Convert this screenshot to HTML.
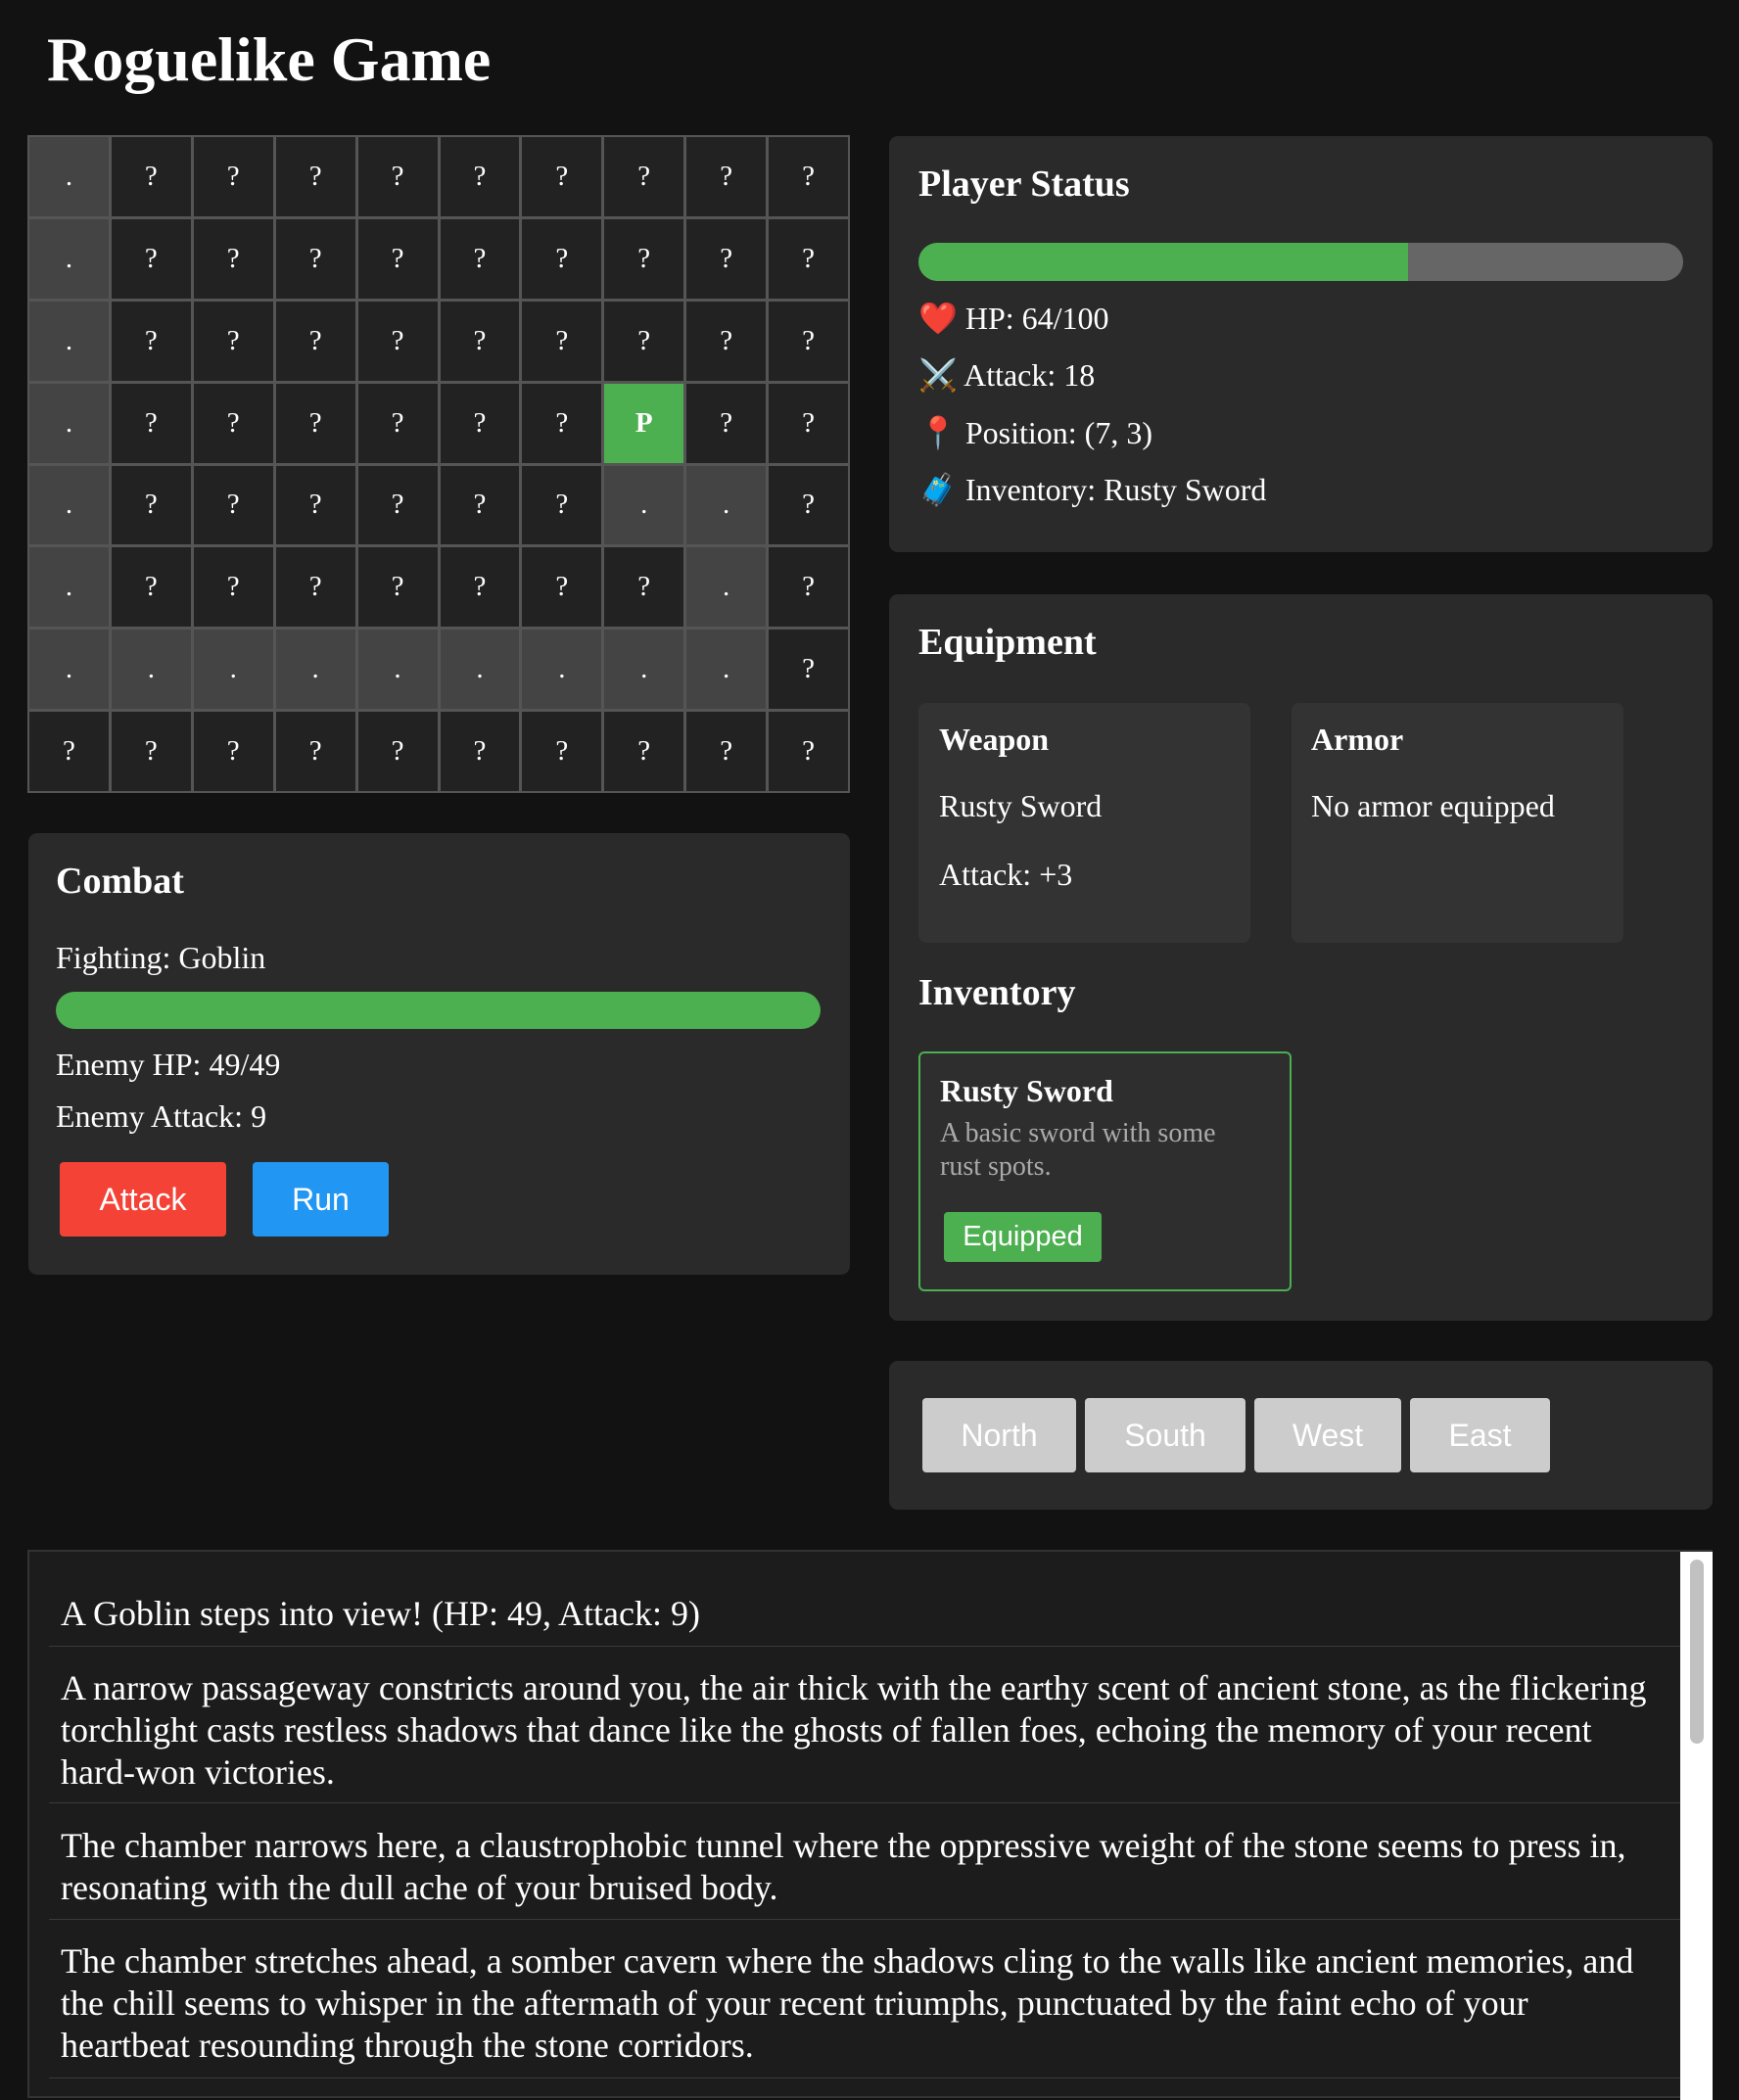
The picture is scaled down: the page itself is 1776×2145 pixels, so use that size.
<!DOCTYPE html>
<html><head><meta charset="utf-8"><style>
*{box-sizing:border-box;margin:0;padding:0}
body{width:1776px;height:2132px;background:#121212;color:#fff;font-family:"Liberation Serif",serif;position:relative;overflow:hidden}
.a{position:absolute}
h1{position:absolute;left:48px;top:24px;font-size:64px;font-weight:bold}
.grid{position:absolute;left:28px;top:138px;width:840px;height:672px;background:#555;display:grid;grid-template-columns:repeat(10,1fr);grid-template-rows:repeat(8,1fr);gap:3px;padding:2px}
.grid div{background:#222;display:flex;align-items:center;justify-content:center;font-size:29px}
.grid div.v{background:#444}
.grid div.p{background:#4caf50;font-weight:bold}
.panel{position:absolute;background:#2a2a2a;border-radius:9px}
h2{position:absolute;font-size:38px;font-weight:bold}
.t{position:absolute;font-size:32px;white-space:nowrap}
.card{position:absolute;background:#333;border-radius:8px}
.btn{position:absolute;font-family:"Liberation Sans",sans-serif;font-size:32px;color:#fff;display:flex;align-items:center;justify-content:center;border-radius:4px}
.log{position:absolute;left:28px;top:1583px;width:1721px;height:560px;border:2px solid #333;background:#1c1c1c}
.log p{position:absolute;left:32px;width:1628px;font-size:36px;line-height:43px}
.sep{position:absolute;left:20px;width:1680px;height:1px;background:#3a3a3a}
</style></head><body>
<h1>Roguelike Game</h1>
<div class="grid">
<div class="v">.</div><div>?</div><div>?</div><div>?</div><div>?</div><div>?</div><div>?</div><div>?</div><div>?</div><div>?</div>
<div class="v">.</div><div>?</div><div>?</div><div>?</div><div>?</div><div>?</div><div>?</div><div>?</div><div>?</div><div>?</div>
<div class="v">.</div><div>?</div><div>?</div><div>?</div><div>?</div><div>?</div><div>?</div><div>?</div><div>?</div><div>?</div>
<div class="v">.</div><div>?</div><div>?</div><div>?</div><div>?</div><div>?</div><div>?</div><div class="p">P</div><div>?</div><div>?</div>
<div class="v">.</div><div>?</div><div>?</div><div>?</div><div>?</div><div>?</div><div>?</div><div class="v">.</div><div class="v">.</div><div>?</div>
<div class="v">.</div><div>?</div><div>?</div><div>?</div><div>?</div><div>?</div><div>?</div><div>?</div><div class="v">.</div><div>?</div>
<div class="v">.</div><div class="v">.</div><div class="v">.</div><div class="v">.</div><div class="v">.</div><div class="v">.</div><div class="v">.</div><div class="v">.</div><div class="v">.</div><div>?</div>
<div>?</div><div>?</div><div>?</div><div>?</div><div>?</div><div>?</div><div>?</div><div>?</div><div>?</div><div>?</div>
</div>

<div class="panel" style="left:29px;top:851px;width:839px;height:451px"></div>
<h2 style="left:57px;top:878px">Combat</h2>
<div class="t" style="left:57px;top:960px">Fighting: Goblin</div>
<div class="a" style="left:57px;top:1013px;width:781px;height:38px;border-radius:19px;background:#4caf50"></div>
<div class="t" style="left:57px;top:1069px">Enemy HP: 49/49</div>
<div class="t" style="left:57px;top:1122px">Enemy Attack: 9</div>
<div class="btn" style="left:61px;top:1187px;width:170px;height:76px;background:#f44336">Attack</div>
<div class="btn" style="left:258px;top:1187px;width:139px;height:76px;background:#2196f3">Run</div>

<div class="panel" style="left:908px;top:139px;width:841px;height:425px"></div>
<h2 style="left:938px;top:166px">Player Status</h2>
<div class="a" style="left:938px;top:248px;width:781px;height:39px;border-radius:20px;background:#666;overflow:hidden"><div style="width:500px;height:100%;background:#4caf50"></div></div>
<div class="t" style="left:938px;top:306px">❤️ HP: 64/100</div>
<div class="t" style="left:938px;top:364px">⚔️ Attack: 18</div>
<div class="t" style="left:938px;top:423px">📍 Position: (7, 3)</div>
<div class="t" style="left:938px;top:481px">🧳 Inventory: Rusty Sword</div>

<div class="panel" style="left:908px;top:607px;width:841px;height:742px"></div>
<h2 style="left:938px;top:634px">Equipment</h2>
<div class="card" style="left:938px;top:718px;width:339px;height:245px"></div>
<div class="t" style="left:959px;top:737px;font-weight:bold">Weapon</div>
<div class="t" style="left:959px;top:805px">Rusty Sword</div>
<div class="t" style="left:959px;top:875px">Attack: +3</div>
<div class="card" style="left:1319px;top:718px;width:339px;height:245px"></div>
<div class="t" style="left:1339px;top:737px;font-weight:bold">Armor</div>
<div class="t" style="left:1339px;top:805px">No armor equipped</div>
<h2 style="left:938px;top:992px">Inventory</h2>
<div class="a" style="left:938px;top:1074px;width:381px;height:245px;border:2px solid #4caf50;border-radius:6px;background:#2e2e2e"></div>
<div class="t" style="left:960px;top:1096px;font-weight:bold">Rusty Sword</div>
<div class="a" style="left:960px;top:1141px;font-size:28px;line-height:34px;color:#aaa;width:320px">A basic sword with some rust spots.</div>
<div class="btn" style="left:964px;top:1238px;width:161px;height:51px;background:#4caf50;font-size:29px">Equipped</div>

<div class="panel" style="left:908px;top:1390px;width:841px;height:152px"></div>
<div class="btn" style="left:942px;top:1428px;width:157px;height:76px;background:#ccc">North</div>
<div class="btn" style="left:1108px;top:1428px;width:164px;height:76px;background:#ccc">South</div>
<div class="btn" style="left:1281px;top:1428px;width:150px;height:76px;background:#ccc">West</div>
<div class="btn" style="left:1440px;top:1428px;width:143px;height:76px;background:#ccc">East</div>

<div class="log">
<p style="top:42px">A Goblin steps into view! (HP: 49, Attack: 9)</p>
<div class="sep" style="top:96px"></div>
<p style="top:118px">A narrow passageway constricts around you, the air thick with the earthy scent of ancient stone, as the flickering torchlight casts restless shadows that dance like the ghosts of fallen foes, echoing the memory of your recent <span style="white-space:nowrap">hard-won</span> victories.</p>
<div class="sep" style="top:256px"></div>
<p style="top:279px">The chamber narrows here, a claustrophobic tunnel where the oppressive weight of the stone seems to press in, resonating with the dull ache of your bruised body.</p>
<div class="sep" style="top:375px"></div>
<p style="top:397px">The chamber stretches ahead, a somber cavern where the shadows cling to the walls like ancient memories, and the chill seems to whisper in the aftermath of your recent triumphs, punctuated by the faint echo of your heartbeat resounding through the stone corridors.</p>
<div class="sep" style="top:537px"></div>
<div class="a" style="left:1686px;top:0;width:33px;height:560px;background:#fff"></div>
<div class="a" style="left:1696px;top:8px;width:14px;height:188px;background:#c1c1c1;border-radius:7px"></div>
</div>
</body></html>
